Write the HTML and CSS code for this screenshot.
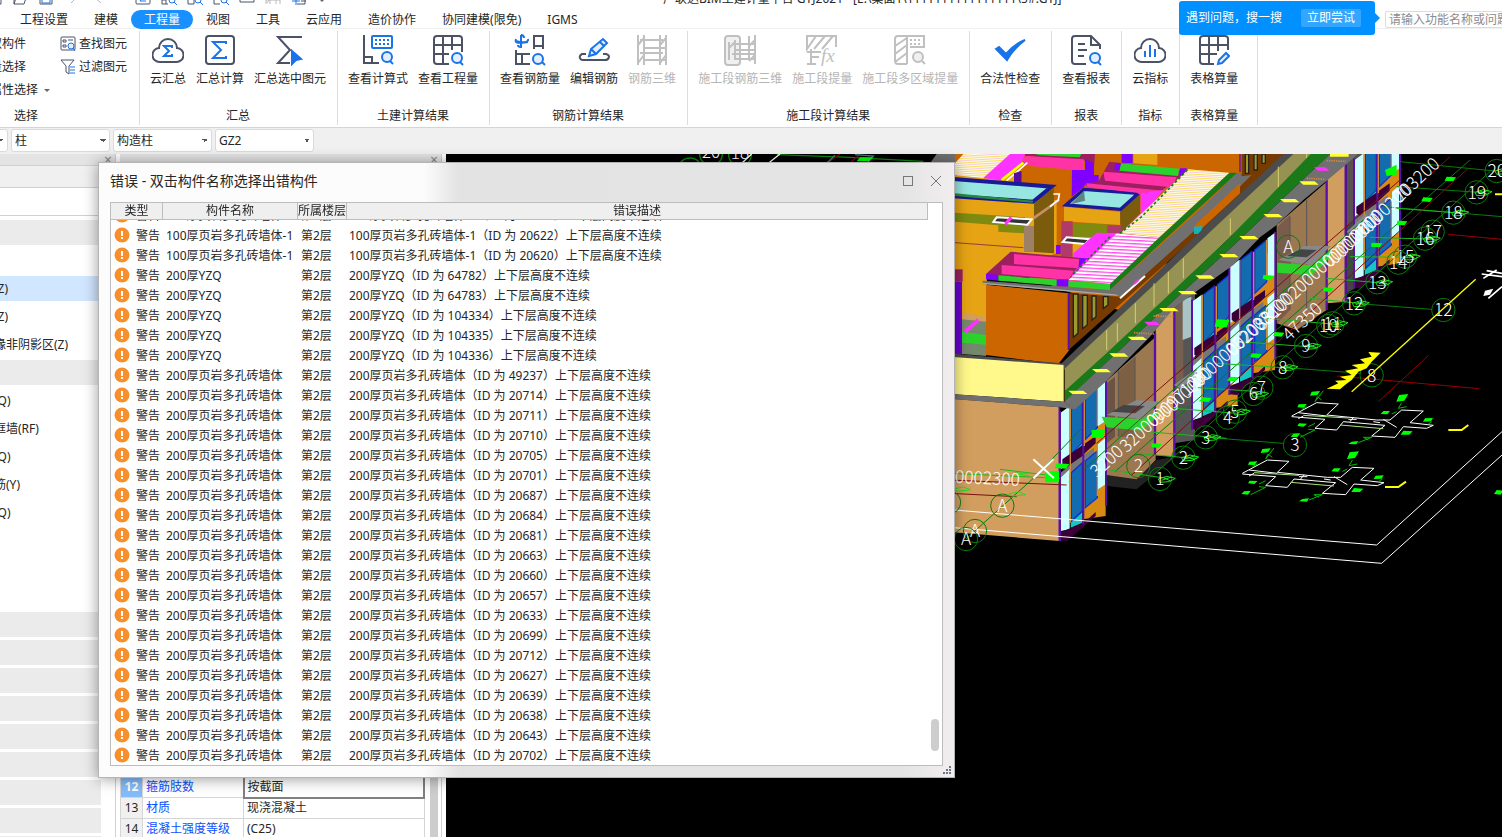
FILE: index.html
```html
<!DOCTYPE html>
<html lang="zh-CN">

<head>
    <meta charset="UTF-8">
    <meta name="viewport" content="width=device-width, initial-scale=1.0">
    <title>广联达BIM土建计量平台 GTJ2021</title>
    <link rel="stylesheet" href="styles.css">
    <script src="script.js" defer></script>
</head>

<body>
    <header class="titlebar">
        <div class="quick">
            <button aria-label="新建"><svg viewBox="0 0 16 16"><path d="M1 1h14v14H1" /></svg></button>
            <button aria-label="打开"><svg viewBox="0 0 16 16"><path d="M2 15V2h11v4M2 15h10l3-9H5z" /></svg></button>
            <button aria-label="保存"><svg viewBox="0 0 16 16"><path d="M2 1h12v14H2z" /><path class="b" d="M4 14V9h8v5z" /></svg></button>
            <button aria-label="撤销"><svg viewBox="0 0 16 16"><path class="g" d="M7 14l6-6" /></svg></button>
            <button aria-label="恢复"><svg viewBox="0 0 16 16"><path class="g" d="M11 14L4 8" /></svg></button>
        </div>
        <div class="quick quick-tools">
            <button aria-label="汇总计算"><svg viewBox="0 0 16 16"><rect x="1" y="1" width="14" height="14" rx="1" /><path class="b" d="M11 5H5l3 3-3 4h6" /></svg></button>
            <button aria-label="查看计算式"><svg viewBox="0 0 16 16"><path d="M1 1v14h6M1 11h4v4" /><circle class="b" cx="11" cy="11" r="3" /><path class="b" d="M13 13l3 3" /></svg></button>
            <button aria-label="查看工程量"><svg viewBox="0 0 16 16"><path d="M1 1v14h6M7 1v14M1 8h6" /><circle class="b" cx="11" cy="11" r="3" /><path class="b" d="M13 13l3 3" /></svg></button>
            <button aria-label="查看钢筋量"><svg viewBox="0 0 16 16"><path d="M1 7v8h6M1 9h6" /><circle class="b" cx="11" cy="11" r="3" /><path class="b" d="M13 13l3 3" /></svg></button>
            <button aria-label="编辑钢筋"><svg viewBox="0 0 16 16"><path d="M1 9v4h14V9" /><path class="b" d="M6 11l4-6" /></svg></button>
            <button aria-label="钢筋三维"><svg viewBox="0 0 16 16"><path class="g" d="M1 1v14M5 1v14M11 1v14M15 1v14M1 11h14M2 14l3-4" /></svg></button>
            <button aria-label="识别"><svg viewBox="0 0 16 16"><path d="M6 15h8V1M10 12h5" /><path class="b" d="M1 12h8M5 6v10" /></svg></button>
            <button class="caret" aria-label="更多"></button>
        </div>
        <div class="app-title">广联达BIM土建计量平台 GTJ2021 - [E:\桌面1\1111111111111111\5#.GTJ]</div>
    </header>

    <nav class="tabs">
        <a href="#">工程设置</a>
        <a href="#">建模</a>
        <a href="#" class="active">工程量</a>
        <a href="#">视图</a>
        <a href="#">工具</a>
        <a href="#">云应用</a>
        <a href="#">造价协作</a>
        <a href="#">协同建模(限免)</a>
        <a href="#">IGMS</a>
        <input class="search" type="text" aria-label="搜索" placeholder="请输入功能名称或问题">
    </nav>

    <div class="tip">
        <span>遇到问题，搜一搜</span>
        <button>立即尝试</button>
    </div>

    <section class="ribbon">
        <div class="group group-select">
            <div class="tools">
                <div class="links">
                    <button>拾取构件</button>
                    <button>批量选择</button>
                    <button>按属性选择<i class="caret"></i></button>
                </div>
                <div class="links">
                    <button><svg viewBox="0 0 16 16"><rect x="1" y="1" width="14" height="13" rx="1" /><path d="M3 4h3v2H3zM3 9h3v2H3zM8 4h5" /><circle class="b f" cx="11" cy="10" r="3" /><path class="b" d="M13 12l2 3" /></svg>查找图元</button>
                    <button><svg viewBox="0 0 16 16"><path d="M1 1h13L9 7v8l-3-2V7z" /><path class="b" d="M10 8h5M10 11h5M10 14h5" /></svg>过滤图元</button>
                </div>
            </div>
            <h2>选择</h2>
        </div>
        <div class="group">
            <div class="tools">
                <button class="tool"><svg viewBox="0 0 32 32"><path d="M8 28h16a7 7 0 0 0 1-14A9 9 0 0 0 7 14a7 7 0 0 0 1 14z" /><path class="b" d="M20 14v-2h-8l5 5-5 5h8v-2" /></svg>云汇总</button>
                <button class="tool"><svg viewBox="0 0 32 32"><rect x="2" y="2" width="28" height="28" rx="3" /><path class="b" d="M22 10V8H9l8 8-8 8h13v-2" /></svg>汇总计算</button>
                <button class="tool"><svg viewBox="0 0 32 32"><path d="M28 3H4l12 13L4 29h12" /><path class="b s" d="M18 17l9 8-5 1-4 4z" /></svg>汇总选中图元</button>
            </div>
            <h2>汇总</h2>
        </div>
        <div class="group">
            <div class="tools">
                <button class="tool"><svg viewBox="0 0 32 32"><path d="M2 1v28h15M2 23h8v6" /><rect class="b" x="10" y="2" width="20" height="12" rx="1" /><path class="b" stroke-dasharray="2 2" d="M13 6h14M13 10h14" /><circle class="b f" cx="25" cy="23" r="5" /><path class="b" d="M28 27l3 3" /></svg>查看计算式</button>
                <button class="tool"><svg viewBox="0 0 32 32"><path d="M17 30H5a3 3 0 0 1-3-3V5a3 3 0 0 1 3-3h22a3 3 0 0 1 3 3v13M2 11h28M2 20h15M11 2v28M20 2v14" /><circle class="b f" cx="25" cy="24" r="5" /><path class="b" d="M28 28l3 3" /></svg>查看工程量</button>
            </div>
            <h2>土建计算结果</h2>
        </div>
        <div class="group">
            <div class="tools">
                <button class="tool"><svg viewBox="0 0 32 32"><path class="b" d="M7 1c2 0 3 1 3 3M7 1v12c-2 0-3-1-3-2M2 5c-2 5 4 4 12 3M14 5c1 4-6 4-12 2" /><path d="M20 15V2h9v13M20 12h9M2 16v14h14M2 20h14M8 20v10" /><circle class="b f" cx="24" cy="25" r="5" /><path class="b" d="M28 28l3 3" /></svg>查看钢筋量</button>
                <button class="tool"><svg viewBox="0 0 32 32"><path d="M8 20H4c-4 2-2 6 1 6h22c4 0 6-5 1-6h-3" /><path class="b f" d="M11 22l2-7L25 5l4 4-11 11zM22 8l4 4M13 15l5 5" /></svg>编辑钢筋</button>
                <button class="tool" disabled><svg viewBox="0 0 32 32"><path d="M2 1v30M8 1v30M24 1v30M30 1v30M4 6h23M8 14h22M4 19h23M8 26h22M2 11l6-7M2 29l6-8M24 11l6-7M24 29l6-8" /></svg>钢筋三维</button>
            </div>
            <h2>钢筋计算结果</h2>
        </div>
        <div class="group">
            <div class="tools">
                <button class="tool" disabled><svg viewBox="0 0 32 32"><rect class="pale" x="1" y="2" width="15" height="29" rx="3" /><path d="M5 8v18M11 6v20M25 2v24M31 1v29M8 10h22M12 16h19M8 20h22M12 25h19M5 14l6-6M25 12l6-6M25 27l6-6" /></svg>施工段钢筋三维</button>
                <button class="tool" disabled><svg viewBox="0 0 32 32"><path d="M30 13V2H1v13l9-13M8 15L19 2M16 15L27 2M1 18h14M5 15v15M1 30h9M5 23h8" /><text x="15" y="28">fx</text></svg>施工段提量</button>
                <button class="tool" disabled><svg viewBox="0 0 32 32"><path d="M13 30H4a3 3 0 0 1-3-3V5a3 3 0 0 1 3-3h26v11H16M13 2v28M1 12l12-8M1 20l12-9M1 28l12-9" /><path stroke-dasharray="2 2" d="M16 6h11M16 10h11" /><circle class="pale" cx="24" cy="23" r="5" /><path d="M28 27l3 3" /></svg>施工段多区域提量</button>
            </div>
            <h2>施工段计算结果</h2>
        </div>
        <div class="group">
            <div class="tools">
                <button class="tool"><svg viewBox="0 0 32 32"><path class="b s" d="M2 15l3-2 7 7C17 14 23 9 31 6 23 12 17 19 13 26z" /></svg>合法性检查</button>
            </div>
            <h2>检查</h2>
        </div>
        <div class="group">
            <div class="tools">
                <button class="tool"><svg viewBox="0 0 32 32"><path d="M16 30H5a3 3 0 0 1-3-3V5a3 3 0 0 1 3-3h16l9 9v4M21 2v9h9M8 10h7M8 16h9M8 22h6" /><circle class="b f" cx="25" cy="24" r="5" /><path class="b" d="M28 28l3 3" /></svg>查看报表</button>
            </div>
            <h2>报表</h2>
        </div>
        <div class="group">
            <div class="tools">
                <button class="tool"><svg viewBox="0 0 32 32"><path d="M8 28h16a7 7 0 0 0 1-14A9 9 0 0 0 7 14a7 7 0 0 0 1 14z" /><path class="b" d="M11 17v6M16 11v12M21 15v8" /></svg>云指标</button>
            </div>
            <h2>指标</h2>
        </div>
        <div class="group group-last">
            <div class="tools">
                <button class="tool"><svg viewBox="0 0 32 32"><path d="M16 30H5a3 3 0 0 1-3-3V5a3 3 0 0 1 3-3h22a3 3 0 0 1 3 3v11M2 11h28M2 20h17M11 2v28M20 2v15" /><path class="b f" d="M20 30l1-4 7-7 3 3-7 7z" /></svg>表格算量</button>
            </div>
            <h2>表格算量</h2>
        </div>
    </section>

    <section class="options">
        <select aria-label="楼层"><option></option></select>
        <select aria-label="构件类别"><option>柱</option></select>
        <select aria-label="构件类型"><option>构造柱</option></select>
        <select aria-label="构件"><option>GZ2</option></select>
    </section>

    <main class="workspace">
        <aside class="tree">
            <div class="panel-head"><button aria-label="关闭">×</button></div>
            <div class="tree-tabs"></div>
            <div class="tree-bar"></div>
            <ul>
                <li class="cat"></li>
                <li></li>
                <li class="selected">构造柱(Z)</li>
                <li>砌体柱(Z)</li>
                <li>约束边缘非阴影区(Z)</li>
                <li class="cat"></li>
                <li>剪力墙(Q)</li>
                <li>人防门框墙(RF)</li>
                <li>砌体墙(Q)</li>
                <li>砌体加筋(Y)</li>
                <li>保温墙(Q)</li>
                <li></li>
                <li></li>
                <li></li>
                <li class="cat"></li>
                <li class="cat"></li>
                <li class="cat"></li>
                <li class="cat"></li>
                <li class="cat"></li>
                <li class="cat"></li>
                <li class="cat"></li>
                <li class="cat"></li>
                <li class="cat"></li>
            </ul>
        </aside>

        <aside class="props">
            <div class="panel-head"><button aria-label="关闭">×</button></div>
            <div class="props-body">
                <table>
                    <tr class="current"><th>12</th><td class="key">箍筋肢数</td><td>按截面</td></tr>
                    <tr><th>13</th><td class="key">材质</td><td>现浇混凝土</td></tr>
                    <tr><th>14</th><td class="key">混凝土强度等级</td><td>(C25)</td></tr>
                </table>
                <div class="props-scroll"></div>
            </div>
        </aside>

        <section class="viewport">
            <svg viewBox="-1512 12 3168 2049" preserveAspectRatio="xMinYMin slice">
                <defs>
                    <pattern id="tileY" width="60" height="11" patternUnits="userSpaceOnUse" patternTransform="rotate(3)">
                        <rect width="60" height="11" fill="#fffde8" /><rect width="60" height="3" fill="#f5e25a" /><rect y="6" width="60" height="2" fill="#f6b7e8" />
                    </pattern>
                    <pattern id="tileP" width="60" height="10" patternUnits="userSpaceOnUse" patternTransform="rotate(3)">
                        <rect width="60" height="10" fill="#fff" /><rect width="60" height="4" fill="#ff4fe8" />
                    </pattern>
                    <!-- one bay of the facade: two floors of glazing between purple mullions -->
                    <g id="bay">
                        <path fill="#d98a14" d="M67 100L135-80V330L67 340z" />
                        <path fill="#cff" d="M0 20L27 0V170L0 190zM112-65L135-82V45L112 60z" />
                        <path fill="#146cb0" stroke="#1530d0" stroke-width="4" d="M32 0L65-25V110L32 145zM74-30L110-60V65L74 100z" />
                        <path fill="#19c4c4" d="M32 145L65 112V130L32 158z" />
                        <path fill="#3c0038" d="M5 160L105 90V112L20 190L5 180z" />
                        <path fill="#777" d="M0 225L100 145V125L30 175L0 200z" />
                        <path fill="#cff" d="M0 215L27 190V370L0 375zM112 115L135 95V235L112 250z" />
                        <path fill="#146cb0" stroke="#1530d0" stroke-width="4" d="M32 200L65 170V315L32 345zM74 165L110 135V275L74 305z" />
                        <path fill="#19c4c4" d="M30 350L65 318V350L30 365z" />
                        <path fill="#3c0038" d="M0 378L70 350L105 318V330L20 405L0 403z" />
                        <path fill="none" stroke="#5a10a8" stroke-width="6" d="M-2 15V405M68-25V355M136-85V300" />
                        <path fill="none" stroke="#d18a3c" stroke-width="4" d="M29 0V190M71-25V120M110-60V60M29 190V350M110 130V270" />
                    </g>
                    <!-- plan fragment -->
                    <g id="plan">
                        <path fill="none" stroke="#fff" stroke-width="3" d="M215 228L290 188L355 192L320 225L470 240H510L545 210L610 213L570 248L640 256L620 265L550 260L525 292L455 288L495 256L370 245L350 270L285 265L315 238L215 230M235 218L320 228M400 232L390 245M385 238H410M460 245L480 248M490 238L530 262M250 228L235 236" />
                        <path fill="none" stroke="#a6e87a" stroke-width="3" d="M250 226L385 234M360 255L490 266" />
                        <path fill="#0f0" d="M275 155l25-2-8 12-22 2zM236 193l24-1-8 11-20-1zM237 250l24 1-10 9-19-2zM220 282l20-2-8 12-20-2zM537 165l28-3-12 20-24 3zM490 213l20 0-8 10-20-1zM615 235l24-1-6 10-24 1zM550 272l28 2-10 10-26 0zM395 305l20-2-6 10-24-1z" />
                        <path fill="none" stroke="#0b0" stroke-width="3" d="M310 152L285 185L292 170L305 180M260 200L245 208M265 260L285 250M240 292L285 270L265 268M545 188L535 205L560 200M515 222L530 215M635 245L625 252M415 308L455 292L430 292L445 300" />
                    </g>
                </defs>

                <rect x="-1512" y="12" width="3168" height="2049" fill="#000" />

                <!-- strip above the dialog -->
                <g fill="none" stroke="#0a8a0a" stroke-width="4">
                    <circle cx="-780" cy="60" r="36" /><circle cx="-717" cy="12" r="34" /><circle cx="-630" cy="14" r="34" />
                    <path d="M-520 14L-300 22L-80 34" />
                    <path stroke="#fff" d="M-595 12L-625 40M-510 12L-545 40" />
                    <path stroke="#800" d="M-330 12L-370 40M-270 12L-300 40" />
                    <path stroke="#3a8080" d="M-285 14L-230 18L-250 40M-345 16L-370 40" />
                </g>
                <path fill="#0f0" d="M-270 22h40l-12 12h-38z" />
                <text class="num" x="-717" y="24">20</text>
                <text class="num" x="-630" y="26">18</text>

                <!-- back of the roof -->
                <path fill="#707070" d="M-40 12H50L15 40H-60z" />
                <path fill="#cc6600" d="M15 12H880V80L700 250L560 500L15 300z" />
                <path fill="#e6a314" d="M15 70L215 60V150L320 150V310L110 380V520H15zM550 12H622V45L550 40z" />
                <path fill="url(#tileY)" d="M40 12H185L100 85L15 75V40z" />
                <path fill="#ff33ff" d="M180 12H225L215 40L155 92L100 84z" />
                <path fill="#9c1f60" d="M225 12H435L432 50L400 30L225 18z" />
                <path fill="#ff33a6" d="M225 18L402 28V62L215 46z" />
                <path fill="#2cd22c" d="M255 12H395L388 22L270 16z" />
                <path fill="none" stroke="#ff0" stroke-width="8" d="M155 90L220 38" />
                <path fill="none" stroke="#fff" stroke-width="5" d="M170 92L232 38" />
                <path fill="#8000ff" d="M366 60H405V28L432 40V75H446V102L410 100L400 112L365 140zM515 12H548V40L515 38z" />
                <path fill="#5a0aa0" d="M192 70L215 62V98H192z" />
                <path fill="#cc6600" d="M448 35L515 12H435V70z" />

                <!-- big tank -->
                <path fill="#e6a314" d="M15 140L250 160V305L225 290V310L110 370V520H15z" />
                <path fill="#98e6e2" stroke="#1a1a99" stroke-width="12" d="M0 86L305 110L250 155L0 138" />
                <path fill="#7a5c0c" d="M252 162L312 112V310L252 306z" />
                <path fill="#7f8a10" d="M15 188L225 202V220L225 250L145 245V226L15 215z" />
                <path fill="#9c8068" d="M222 228H252V306H222z" />
                <path fill="none" stroke="#9a3b3b" stroke-width="3" d="M15 278L220 293" />
                <path fill="#333" stroke="#fff" stroke-width="6" d="M140 202L245 208L232 224L130 216z" />
                <path fill="none" stroke="#f3f" stroke-width="10" d="M166 222L184 202" />
                <path fill="none" stroke="#c8906a" stroke-width="8" d="M250 205L328 150" />
                <path fill="none" stroke="#fff" stroke-width="5" d="M310 132H328L325 150L300 170" />
                <path fill="#2a8a3a" d="M15 130L250 152L248 158L15 138z" />

                <!-- small tank -->
                <path fill="#7a5c0c" d="M510 185L570 128V190L512 250z" />
                <path fill="#e6a314" d="M342 170L510 185V225L342 214z" />
                <path fill="#7f8a10" d="M368 218L512 226V262H368z" />
                <path fill="#b03a6a" d="M334 214H368V320H334zM472 226H514V250H472z" />
                <path fill="#e6a314" d="M368 262H450L400 320H368z" />
                <path fill="#98e6e2" stroke="#1a1a99" stroke-width="10" d="M402 118L565 130L512 178L348 165z" />
                <path fill="#5c8480" d="M402 122L405 152L362 163z" />
                <path fill="#333" stroke="#fff" stroke-width="6" d="M350 262L420 268L405 282L338 276z" />
                <path fill="#8000ff" d="M318 285H332V312H318z" />

                <!-- pink parapets and the tiled slope -->
                <path fill="#9c1f60" d="M478 35L715 62L625 130L410 112L405 100L445 95z" />
                <path fill="#ff33a6" d="M460 65L680 82L665 112L465 92zM410 100L640 122L600 150L560 128L410 112z" />
                <path fill="#2cd22c" d="M512 40L688 56L684 78L508 62z" />
                <path fill="#8000ff" d="M497 38L513 40L508 62L492 60zM690 55H712L690 80z" />
                <path fill="#f3f" d="M572 130L640 120L575 200L510 252L360 395L370 310L440 248L510 250L572 190z" />
                <path fill="#1a7a1a" d="M836 68L862 68L480 420V400z" />
                <path fill="url(#tileY)" d="M715 58L838 68L628 262L512 250z" />
                <path fill="url(#tileP)" d="M500 250L628 262L480 402L355 390z" />
                <path fill="none" stroke="#1a7a1a" stroke-width="5" stroke-dasharray="8 7" d="M712 60L575 200L510 250M480 260L350 392" />
                <path fill="#9c1f60" d="M108 372L182 305L402 325L355 390L108 375z" />
                <path fill="#ff33a6" d="M192 312L392 328L388 355L192 342zM155 345L372 362L355 390L155 372z" />
                <path fill="#8000ff" d="M108 372L145 374V392L108 388zM388 325H412L385 355z" />
                <path fill="#2cd22c" d="M145 376L480 402V420L145 392z" />
                <path fill="#8000ff" d="M320 388H355V410H320z" />

                <!-- front block -->
                <path fill="#707070" d="M98 392L500 422L862 68L905 75V90L520 438L98 402z" />
                <path fill="none" stroke="#aaa" stroke-width="4" d="M98 400L510 436" />
                <path fill="#cc6600" d="M108 404L358 430V600L325 642L108 615z" />
                <path fill="#773a00" d="M358 430L510 440L735 240L875 105L875 12H1010L840 170L358 598z" />
                <path fill="#707070" d="M480 420L862 80L905 75L735 240L510 441z" />
                <path fill="#cc6600" d="M735 225L870 100V130L740 250zM860 12H872V66H850z" />
                <path fill="#19b0b8" d="M732 230L758 228L752 252H732z" />
                <path fill="none" stroke="#5a10a8" stroke-width="4" d="M355 430V600M870 12V66" />
                <path fill="#9a9a30" stroke="#222" stroke-width="4" d="M370 432H384V550L370 562zM398 436H412V524L398 536zM426 438H438V500L426 510zM460 440H474V465L460 475zM886 12H896V70H886zM912 12H922V60H912zM936 12H946V40H936z" />
                <path fill="none" stroke="#fff" stroke-width="6" d="M510 445L585 378" />
                <path fill="none" stroke="#f3f" stroke-width="5" d="M552 402L566 390" />

                <!-- left lower corner -->
                <path fill="#d19e5f" d="M38 488L108 500V518L38 508z" />
                <path fill="#75876c" d="M36 508L108 515V618L36 612z" />
                <path fill="#2cd22c" d="M36 545L108 555V584L36 578z" />
                <path fill="none" stroke="#f3f" stroke-width="12" d="M45 545L85 510" />
                <path fill="#9c1f60" d="M15 358H38V395H15z" />
                <path fill="#6a00d0" d="M15 395H36V612H15z" />
                <path fill="#4c4c4c" d="M0 610L335 640L840 160L1000 12H1040L345 660L0 622z" />
                <path fill="#959254" d="M345 655L840 190L1030 12H1095L840 262L480 605L345 728z" />
                <path fill="none" stroke="#d6d070" stroke-width="3" d="M470 540V600M502 520V575M556 460V520M612 400V470M655 365V430M700 325V385M841 205V255M985 50V130M1070 12V55" />
                <path fill="#1a7a1a" d="M345 722L480 600L840 262L1082 12H1140L840 296L520 590L345 756z" />

                <!-- recessed walls -->
                <path fill="#555" d="M672 480L735 420V870L672 880z" />
                <path fill="#9c7850" d="M470 692L617 560V930L560 990L470 985z" />
                <path fill="#6b5445" d="M470 700L495 680V860L470 880z" />
                <path fill="#7d6044" d="M505 665L555 620V860H505z" />
                <path fill="#d19e5f" d="M617 495L672 475V920L617 915z" />
                <path fill="#756050" d="M672 475L700 452V700L672 720z" />
                <path fill="#a8c4c4" d="M698 450L724 440V560L698 570z" />
                <path fill="#9c7850" d="M980 225L1130 95V480L1040 540L980 520z" />
                <path fill="#7a5c4c" d="M982 230L1020 195V480L982 520z" />
                <path fill="#d19e5f" d="M1130 60L1188 30V455L1130 460z" />
                <path fill="#5a5050" d="M1190 40L1225 12H1245V200L1190 230z" />
                <path fill="#444" d="M1190 230L1240 190V400L1190 430z" />
                <path fill="none" stroke="#555" stroke-width="3" d="M555 620V850M505 660V860M1070 150V480M1020 200V480" />
                <path fill="none" stroke="#5a10a8" stroke-width="7" d="M615 550V915M673 475V920M1130 90V480M1187 30V455" />

                <use href="#bay" x="332" y="768" />
                <use href="#bay" x="728" y="434" />
                <use href="#bay" x="840" y="330" />
                <use href="#bay" x="1214" y="10" />

                <!-- eaves -->
                <path fill="#707070" d="M345 754L520 590L840 296L1140 12H1225L1190 42L1130 92L1060 150L980 225L930 262L850 345L728 432L672 475L600 560L470 692L375 778L342 756z" />
                <path fill="none" stroke="#d18a3c" stroke-width="5" stroke-dasharray="4 3" d="M610 498L672 500M552 548L612 552M1070 85L1125 88M1130 32L1188 34" />

                <!-- balconies -->
                <path fill="#888" d="M470 795L560 750L630 755L575 808z" />
                <path fill="#444" d="M485 785L520 765L585 768L555 790z" />
                <path fill="#2cd22c" d="M455 800L575 808L625 780V795L575 842L470 832z" />
                <path fill="#888" d="M985 330L1060 288H1142L1085 345z" />
                <path fill="#444" d="M1010 318L1050 298L1100 300L1070 322z" />
                <path fill="#2cd22c" d="M982 338L1085 346L1142 300V320L1085 376L982 368z" />
                <path fill="#888" d="M672 705L740 655V680L690 715zM1190 245L1250 190V215L1200 255z" />
                <path fill="#222" d="M470 975L560 988V1018L470 1008zM560 988L620 930L672 920V925L560 1018z" />
                <path fill="#ff3" d="M355 722h45l12 10h-45zM426 657h45l12 10h-45zM478 610h45l12 10h-45zM533 560h46l12 10h-46zM628 474h46l12 10h-46zM684 423h46l12 10h-46zM736 376h46l12 10h-46zM808 312h46l12 10h-46zM868 258h46l12 10h-46zM940 192h46l12 10h-46zM990 147h46l12 10h-46zM1048 94h46l12 10h-46zM1140 12h56v8h-56z" />
                <path fill="#f3f" d="M582 515h36l12 10h-36zM1092 52h34l12 10h-34z" />

                <!-- near wall -->
                <path fill="#fff98c" d="M0 620L342 645V755L0 732z" />
                <path fill="#707070" d="M0 732L342 755L375 778L328 772L0 746z" />
                <path fill="#d19e5f" d="M0 746L328 772V1173L0 1146z" />
                <path fill="none" stroke="#5a10a8" stroke-width="5" d="M328 770V1173" />
                <path fill="none" stroke="#7a5a20" stroke-width="3" d="M342 645V755" />

                <!-- sheet frame -->
                <path fill="none" stroke="#fff" stroke-width="3" d="M0 1079L1280 1185L1656 845M0 1132L1295 1240L1656 915" />

                <!-- grid lines -->
                <g fill="none" stroke="#0b7a0b" stroke-width="3">
                    <path d="M495 965L1560 30M610 975L1620 65M400 960L1240 210M50 1165L250 985L400 830M1350 35L1635 63M1300 170L1656 200M1215 460L1445 478M1000 652L1230 670M767 862L1000 880M1340 110L1600 128" />
                    <path stroke="#1db81d" d="M0 970L330 985M480 960L650 985M560 910L740 926M590 845L830 865M672 775L860 790M700 710L930 725M800 640L1030 655M870 575L1100 592M950 505L1180 525M1080 445L1250 462M1130 385L1310 400M1200 320L1390 322M1260 262L1460 268M1340 175L1540 190M150 958L290 975" />
                    <path stroke="#7a1010" d="M545 975L1555 55M0 990L350 1005M440 880L1350 90M0 1030L200 1040" />
                    <path stroke="#900" d="M1162 678L1588 716M1435 617L1285 755M1495 253L1656 268M1440 75L1500 20" />
                </g>
                <path fill="#0f0" d="M285 965l42-2v34l-42 0zM425 840l40-2-5 26-35-1zM320 940l38 2-10 14-34-2zM760 742l24 2-8 12-30-2zM605 880l30 2-8 12-22-2zM1120 412l30 2-8 12-22-2zM1305 60l35-16v30l-30 4zM1342 212l30 2-8 12-24-2zM1420 142l28 2-8 12-26-2zM1490 80l28 2-8 12-26-2zM1265 278l32 2-8 12-26-2zM905 610l30 2-8 12-26-2zM840 680l25 2-8 12-26-2zM975 546l28 2-8 12-26-2zM800 508l38 2-8 22-36-2zM940 375l32 2-8 12-26-2zM1640 1020l20 2-8 12-20-2z" />
                <path fill="none" stroke="#1ee01e" stroke-width="3" d="M195 968l45 2-35 3 35 5M10 1017l30-6 22 8-40 5zM175 1032l30-6 22 8-40 5z" />
                <g id="bubbles"></g>
                <path fill="none" stroke="#fff" stroke-width="6" d="M250 928L312 985M310 928L250 985" />

                <!-- dimensions -->
                <g class="dim">
                    <text x="14" y="998" transform="rotate(3 14 998)">0002300</text>
                    <text transform="translate(442 985) rotate(-43)">3200</text>
                    <text transform="translate(530 910) rotate(-43)">32000</text>
                    <text transform="translate(610 835) rotate(-43)">00097100</text>
                    <text transform="translate(628 826) rotate(-43)">90000000</text>
                    <text transform="translate(745 715) rotate(-43)">0000003200</text>
                    <text transform="translate(850 620) rotate(-43)">002038</text>
                    <text transform="translate(935 545) rotate(-43)">83100</text>
                    <text transform="translate(948 528) rotate(-43)">3200</text>
                    <text transform="translate(1035 450) rotate(-43)">200000</text>
                    <text transform="translate(1140 355) rotate(-43)">00000000</text>
                    <text transform="translate(1155 345) rotate(-43)">0000000</text>
                    <text transform="translate(1245 258) rotate(-43)">0000200</text>
                    <text transform="translate(1350 160) rotate(-43)">203200</text>
                    <text transform="translate(1018 575) rotate(-43)">47350</text>
                </g>

                <!-- site plan -->
                <path fill="none" stroke="#ff0" stroke-width="4" d="M1577 388L1205 725" />
                <path fill="#ff0" d="M1130 716L1165 700L1155 692L1190 690L1170 680L1205 675L1185 662L1225 655L1205 645L1245 640L1230 628L1265 620L1255 606L1292 608L1265 635L1250 655L1225 665L1205 690L1185 705L1170 718z" />
                <path fill="none" stroke="#ff0" stroke-width="6" d="M1495 840H1535L1555 825M1305 1011H1345L1368 995M1635 133H1656" />
                <use href="#plan" x="810" y="570" />
                <use href="#plan" x="662" y="742" />
                <path fill="none" stroke="#fff" stroke-width="5" d="M1595 372L1656 380M1600 385L1640 360M1610 362L1656 370M1615 445L1656 410" />
                <path fill="#fff" d="M1605 422l25-6-10 18-20 4z" />
            </svg>
        </section>

        <section class="dialog" role="dialog" aria-labelledby="dlg-title">
            <div class="dialog-head">
                <h1 id="dlg-title">错误 - 双击构件名称选择出错构件</h1>
                <button aria-label="最大化"><svg viewBox="0 0 12 12"><rect x="1.5" y="1.5" width="9" height="9" /></svg></button>
                <button aria-label="关闭"><svg viewBox="0 0 12 12"><path d="M1 1l10 10M11 1L1 11" /></svg></button>
            </div>
            <div class="list">
                <div class="list-scroll">
                    <table>
                        <thead>
                            <tr>
                                <th class="c-type">类型</th>
                                <th class="c-name">构件名称</th>
                                <th class="c-floor">所属楼层</th>
                                <th class="c-desc">错误描述</th>
                            </tr>
                        </thead>
                        <tbody id="rows"></tbody>
                    </table>
                </div>
                <div class="thumb"></div>
            </div>
            <svg class="grip" viewBox="0 0 8 8"><path d="M6 0h2v2H6zM3 3h2v2H3zM6 3h2v2H6zM0 6h2v2H0zM3 6h2v2H3zM6 6h2v2H6z" /></svg>
        </section>
    </main>
</body>

</html>
```

FILE: styles.css
```css
* {
    box-sizing: border-box;
}

body {
    margin: 0;
    height: 100vh;
    display: flex;
    flex-direction: column;
    overflow: hidden;
    position: relative;
    background: #fff;
    color: #262626;
    font-family: "Noto Sans", "Noto Sans CJK SC", sans-serif;
    font-size: 12px;
    line-height: 18px;
}

button {
    border: 0;
    padding: 0;
    background: none;
    color: inherit;
    font: inherit;
    white-space: nowrap;
}

h1,
h2 {
    margin: 0;
    font-weight: normal;
}

svg {
    display: block;
    fill: none;
    stroke: #4b5266;
}

svg .b {
    stroke: #1a73e8;
}

svg .f {
    fill: #e3effd;
}

svg .s {
    fill: #1a73e8;
}

svg .g {
    stroke: #b8b8b8;
}

svg .pale {
    fill: #f0f0f0;
}

.caret {
    display: inline-block;
    border: 3px solid transparent;
    border-top-color: #666;
    border-bottom: 0;
}

/* title bar */
.titlebar {
    height: 10px;
    flex: none;
    display: flex;
    align-items: flex-end;
    margin-left: -14px;
}

.quick {
    display: flex;
    align-items: flex-end;
    gap: 10px;
    width: 149px;
    padding-bottom: 5px;
    flex: none;
}

.quick svg {
    width: 16px;
    height: 16px;
}

.quick-tools {
    width: 528px;
}

.quick-tools .caret {
    margin: 0 0 3px 2px;
}

.app-title {
    line-height: 18px;
    margin-bottom: 2px;
    white-space: nowrap;
}

/* tabs */
.tabs {
    height: 19px;
    flex: none;
    display: flex;
    padding-left: 7px;
    border-bottom: 1px solid #f0f0f0;
}

.tabs a {
    height: 19px;
    padding: 0 13px;
    border-radius: 10px;
    color: inherit;
    line-height: 20px;
    text-decoration: none;
    white-space: nowrap;
}

.tabs .active {
    background: #1890ff;
    color: #fff;
}

.search {
    width: 130px;
    height: 17px;
    margin: 1px -13px 0 auto;
    padding: 0 3px;
    border: 1px solid #dcdcdc;
    border-radius: 2px;
    font: inherit;
}

.search::placeholder {
    color: #8c8c8c;
}

.tip {
    position: absolute;
    top: 1px;
    right: 127px;
    z-index: 2;
    display: flex;
    align-items: center;
    gap: 19px;
    height: 34px;
    padding: 0 14px 0 7px;
    border-radius: 3px;
    background: #0090ff;
    color: #fff;
}

.tip::after {
    content: "";
    position: absolute;
    left: 100%;
    border: 5px solid transparent;
    border-left-color: #0090ff;
    border-right: 0;
}

.tip button {
    height: 18px;
    padding: 0 6px;
    border-radius: 2px;
    background: #33a6ff;
}

/* ribbon */
.ribbon {
    height: 99px;
    flex: none;
    display: flex;
    padding: 2px 0;
    border-bottom: 1px solid #d5d5d5;
}

.group {
    flex: none;
    display: flex;
    flex-direction: column;
    justify-content: space-between;
    padding: 0 11px 0 10px;
    border-right: 1px solid #dcdcdc;
}

.group h2 {
    font-size: 12px;
    line-height: 18px;
    text-align: center;
}

.tools {
    display: flex;
    gap: 10px;
}

.tool {
    display: flex;
    flex-direction: column;
    align-items: center;
    gap: 4px;
    padding-top: 3px;
}

.tool svg {
    width: 32px;
    height: 32px;
    stroke-width: 2;
}

.tool:disabled {
    color: #b5b5b5;
}

.tool:disabled svg {
    stroke: #c0c0c0;
}

.tool svg text {
    fill: #c0c0c0;
    stroke: none;
    font: italic 19px "Liberation Serif", serif;
}

.group-select {
    width: 227px;
    margin-left: -87px;
    padding: 0 16px 0 65px;
}

.group-select h2 {
    margin-left: -65px;
    margin-right: -16px;
}

.group-select .tools {
    justify-content: space-between;
    padding-top: 4px;
}

.links {
    display: flex;
    flex-direction: column;
    align-items: flex-start;
    gap: 5px;
}

.links button {
    display: flex;
    align-items: center;
    gap: 3px;
}

.links svg {
    width: 16px;
    height: 16px;
}

.links .caret {
    margin-left: 3px;
}

.group-last {
    padding-right: 19px;
}

/* component selectors */
.options {
    height: 26px;
    flex: none;
    display: flex;
    gap: 3px;
    padding-top: 1px;
    margin-left: -91px;
    background: #f0f0f0;
}

.options select {
    width: 99px;
    height: 23px;
    padding: 0 3px;
    border: 1px solid #dadada;
    border-radius: 3px;
    appearance: none;
    background: linear-gradient(45deg, transparent 50%, #555 50%) 88px 9px / 3px 3px no-repeat, linear-gradient(-45deg, transparent 50%, #555 50%) 91px 9px / 3px 3px no-repeat, #fff;
    color: inherit;
    font: inherit;
}

/* workspace */
.workspace {
    flex: 1;
    min-height: 0;
    display: flex;
    position: relative;
}

.panel-head {
    height: 12px;
    display: flex;
    justify-content: flex-end;
    padding-right: 3px;
    border-bottom: 1px solid #d0d0d0;
    background: #e4e4e4;
    color: #888;
}

.panel-head button {
    font-size: 14px;
    line-height: 12px;
}

.tree {
    width: 116px;
    flex: none;
    overflow: hidden;
    border-right: 1px solid #d0d0d0;
}

.tree-tabs {
    height: 22px;
    border-bottom: 1px solid #d0d0d0;
    background: #f0f0f0;
}

.tree-bar {
    height: 28px;
    border-bottom: 1px solid #d0d0d0;
}

.tree ul {
    margin: 4px 14px 0 -42px;
    padding: 0;
    list-style: none;
}

.tree li {
    height: 25px;
    margin-bottom: 3px;
    line-height: 25px;
    white-space: nowrap;
}

.tree .cat {
    background: #ebebeb;
}

.tree .selected {
    background: #d1e6ff;
}

.props {
    width: 322px;
    flex: none;
    display: flex;
    flex-direction: column;
    overflow: hidden;
    margin: 0 4px;
    border-right: 1px solid #d0d0d0;
}

.props-body {
    flex: 1;
    display: flex;
    align-items: flex-end;
    justify-content: space-between;
    padding-right: 3px;
}

.props table {
    width: 305px;
    margin-bottom: -3px;
    border-collapse: collapse;
    table-layout: fixed;
}

.props th,
.props td {
    height: 21px;
    padding: 0 3px;
    border: 1px solid #d5d5d5;
    line-height: 18px;
    white-space: nowrap;
}

.props th {
    width: 22px;
    padding: 0;
    background: #f0f0f0;
    font-weight: normal;
}

.props .key {
    width: 101px;
    color: #0a50ff;
}

.props .current th {
    background: #84bcfa;
    color: #fff;
    font-weight: bold;
}

.props .current td:last-child {
    border: 2px solid #808080;
}

.props-scroll {
    align-self: stretch;
    width: 8px;
    background: #cdcdcd;
}

.viewport {
    flex: 1;
    min-width: 0;
    background: #000;
}

.viewport svg {
    width: 100%;
    height: 100%;
    stroke: none;
}

.viewport text {
    fill: #fff;
    font-family: "Noto Sans CJK SC", sans-serif;
    font-size: 52px;
    font-weight: 300;
}

.viewport .num,
.viewport #bubbles text {
    text-anchor: middle;
}

#bubbles .ring {
    fill: none;
    stroke: #0b7a0b;
    stroke-width: 3;
}

#bubbles .tag {
    fill: none;
    stroke: #1ee01e;
    stroke-width: 3;
}

/* error dialog */
.dialog {
    position: absolute;
    left: 98px;
    top: 8px;
    width: 857px;
    padding: 0 11px 11px;
    border: 1px solid #b4b4b4;
    background: linear-gradient(90deg, #fcfcfc 38%, #e3e3e3 42%, #e4e4e4 94%, #f2eef0);
    box-shadow: 0 1px 14px rgba(0, 0, 0, .4);
}

.dialog-head {
    height: 39px;
    display: flex;
    align-items: center;
    gap: 16px;
    padding: 0 1px 3px 0;
}

.dialog-head h1 {
    flex: 1;
    font-size: 14px;
    line-height: 20px;
}

.dialog-head svg {
    width: 12px;
    height: 12px;
    stroke: #777;
}

.list {
    position: relative;
    border: 1px solid #bdbdbd;
    background: #fff;
}

.list-scroll {
    height: 562px;
    overflow: hidden;
}

.list table {
    width: 817px;
    border-spacing: 0;
    table-layout: fixed;
}

.list th {
    position: sticky;
    top: 0;
    height: 17px;
    padding: 0;
    border-right: 1px solid #bdbdbd;
    border-bottom: 1px solid #bdbdbd;
    background: #efefef;
    font-weight: normal;
    line-height: 16px;
    white-space: nowrap;
}

.list td {
    height: 20px;
    padding: 2px 3px 0;
    line-height: 18px;
    white-space: nowrap;
}

.list td:last-child {
    padding-left: 2px;
}

.c-type {
    width: 52px;
}

.c-name {
    width: 135px;
}

.c-floor {
    width: 49px;
}

.kind {
    display: flex;
    align-items: flex-start;
    gap: 6px;
}

.kind svg {
    width: 16px;
    height: 16px;
    flex: none;
    fill: #f78f2d;
    stroke: none;
}

.kind .mark {
    fill: #fff;
}

.thumb {
    position: absolute;
    right: 3px;
    bottom: 14px;
    width: 8px;
    height: 32px;
    border-radius: 4px;
    background: #cdcdcd;
}

.grip {
    position: absolute;
    right: 3px;
    bottom: 3px;
    width: 8px;
    height: 8px;
    fill: #6e7480;
    stroke: none;
}
```

FILE: script.js
```js
const names = {
    a: "100厚页岩多孔砖墙体-1",
    b: "200厚YZQ",
    c: "200厚页岩多孔砖墙体"
};

const warnings = [
    ["a", 20624], ["a", 20622], ["a", 20620],
    ["b", 64782], ["b", 64783], ["b", 104334], ["b", 104335], ["b", 104336],
    ["c", 49237], ["c", 20714], ["c", 20711], ["c", 20710], ["c", 20705],
    ["c", 20701], ["c", 20687], ["c", 20684], ["c", 20681], ["c", 20663],
    ["c", 20660], ["c", 20657], ["c", 20633], ["c", 20699], ["c", 20712],
    ["c", 20627], ["c", 20639], ["c", 20638], ["c", 20643], ["c", 20702]
];

const icon = '<svg viewBox="0 0 16 16"><circle cx="8" cy="8" r="7.5"/><path class="mark" d="M7 4h2v5H7zM7 10h2v2H7z"/></svg>';

document.getElementById("rows").innerHTML = warnings.map(([key, id]) => `
    <tr>
        <td><div class="kind">${icon}警告</div></td>
        <td>${names[key]}</td>
        <td>第2层</td>
        <td>${names[key]}（ID 为 ${id}）上下层高度不连续</td>
    </tr>`).join("");

document.querySelector(".list-scroll").scrollTop = 15;

// axis bubbles: label, x, y, has the small green tag
const bubbles = [
    ["20", 1640, 63, 1], ["19", 1580, 127, 1], ["18", 1510, 188, 1], ["17", 1448, 245, 0],
    ["16", 1425, 266, 1], ["15", 1365, 320, 1], ["14", 1345, 338, 0], ["13", 1282, 397, 1],
    ["12", 1212, 460, 1], ["11", 1148, 520, 1], ["10", 1135, 528, 0], ["9", 1068, 588, 1],
    ["8", 998, 652, 1], ["7", 934, 713, 0], ["6", 910, 732, 1], ["5", 855, 785, 1],
    ["4", 833, 803, 0], ["3", 767, 862, 1], ["2", 700, 923, 1], ["1", 630, 987, 1],
    ["2", 565, 948, 0], ["12", 1480, 480, 0], ["8", 1265, 676, 0], ["3", 1035, 885, 0],
    ["A", 157, 1067, 0], ["A", 75, 1143, 0], ["A", 48, 1167, 0], ["A", 1015, 290, 0], ["", -3, 1057, 0]
];

document.getElementById("bubbles").innerHTML = bubbles.map(([label, x, y, tag]) => `
    <circle class="ring" cx="${x}" cy="${y}" r="35"/>
    ${tag ? `<path class="tag" d="M${x - 5} ${y}l25-8 26 6-18 10-28 2zM${x + 5} ${y + 4}l30-10M${x + 10} ${y - 4}l22 10"/>` : ""}
    <text x="${x}" y="${y + 19}">${label}</text>`).join("");
```
